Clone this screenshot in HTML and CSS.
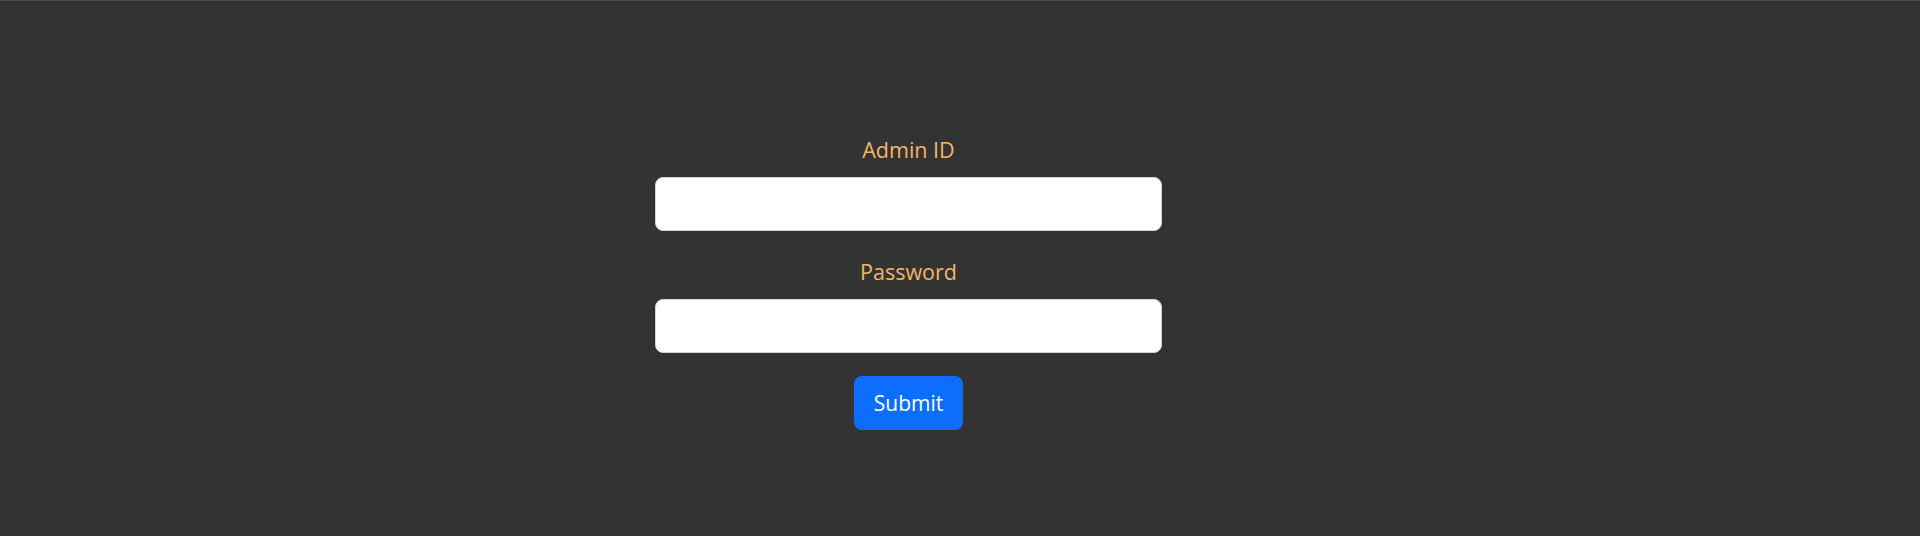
FILE: index.html
```html
<!DOCTYPE html>
<html lang="en">
<head>
<meta charset="utf-8">
<title>Admin Login</title>
<link rel="stylesheet" href="styles.css">
</head>
<body>
<main class="page">
  <form class="login-form">
    <label class="field-label" for="admin-id">Admin ID</label>
    <input class="field-input" id="admin-id" type="text">
    <label class="field-label field-label-next" for="password">Password</label>
    <input class="field-input" id="password" type="password">
    <button class="submit-btn" type="button">Submit</button>
  </form>
</main>
</body>
</html>
```

FILE: styles.css
```css
html, body {
  margin: 0;
  padding: 0;
}

body {
  background: #333333;
  border-top: 1px solid #4a4a4a;
  height: 535px;
  font-family: "Open Sans", "Noto Sans", "Liberation Sans", sans-serif;
}

.page {
  padding-top: 131px;
}

.login-form {
  width: 507px;
  margin-left: 655px;
  display: flex;
  flex-direction: column;
  align-items: center;
}

.field-label {
  display: block;
  color: #f4b565;
  font-size: 21.5px;
  line-height: 33px;
  padding-top: 1px;
  margin-bottom: 11px;
}

.field-label-next {
  margin-top: 23px;
}

.field-input {
  box-sizing: border-box;
  width: 507px;
  height: 54px;
  margin: 0;
  border: 1px solid #ced4da;
  border-radius: 8px;
  background: #ffffff;
}

.submit-btn {
  box-sizing: border-box;
  margin-top: 23px;
  height: 54px;
  padding: 0 20px;
  border: none;
  border-radius: 8px;
  background: #0d6efd;
  color: #ffffff;
  font-family: inherit;
  font-size: 21px;
}
```
